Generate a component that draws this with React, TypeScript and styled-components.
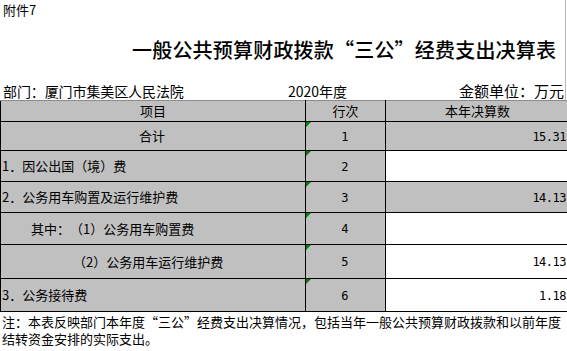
import React from 'react';
import styled, { createGlobalStyle } from 'styled-components';

const GlobalStyle = createGlobalStyle`
  html, body {
    margin: 0;
    padding: 0;
    background: #ffffff;
  }
  body {
    font-family: "Noto Sans CJK SC", "Noto Sans", sans-serif;
    color: #000;
    text-spacing-trim: space-all;
  }
`;

type Row = {
  label: string;
  indent?: number;
  center?: boolean;
  no: string;
  value: string;
  valueShaded: boolean;
  height: number;
};

const rows: Row[] = [
  { label: '合计', center: true, no: '1', value: '15.31', valueShaded: true, height: 29 },
  { label: '1．因公出国（境）费', no: '2', value: '', valueShaded: false, height: 31 },
  { label: '2．公务用车购置及运行维护费', no: '3', value: '14.13', valueShaded: true, height: 31 },
  { label: '其中：（1）公务用车购置费', indent: 29, no: '4', value: '', valueShaded: false, height: 32 },
  { label: '（2）公务用车运行维护费', indent: 71, no: '5', value: '14.13', valueShaded: false, height: 34 },
  { label: '3．公务接待费', no: '6', value: '1.18', valueShaded: false, height: 33 },
];

const Page = styled.div`
  width: 567px;
  height: 351px;
  position: relative;
  overflow: hidden;
`;

const TopArea = styled.div`
  width: 565px;
  border-right: 1px solid #b8b8b8;
`;

const Attachment = styled.div`
  height: 20px;
  padding-left: 3px;
  font-size: 13px;
  line-height: 20px;
`;

const Title = styled.h1`
  margin: 0;
  height: 60px;
  padding-left: 132px;
  font-size: 20px;
  font-weight: 500;
  line-height: 60px;
  white-space: nowrap;
  letter-spacing: 0.2px;
`;

const InfoBar = styled.div`
  height: 20px;
  display: grid;
  grid-template-columns: 288px 1fr auto;
  align-items: end;
  font-size: 14px;
  line-height: 18px;
  white-space: nowrap;
`;

const InfoLeft = styled.span`
  padding-left: 3px;
  letter-spacing: -0.1px;
`;

const InfoRight = styled.span`
  padding-right: 1px;
  font-size: 15px;
`;

const Table = styled.table`
  border-collapse: collapse;
  table-layout: fixed;
  width: 566px;
  font-size: 13px;
`;

const HeadCell = styled.th<{ $w: number }>`
  width: ${(p) => p.$w}px;
  height: 20px;
  padding: 0;
  background: #c0c0c0;
  border: 1px solid #000;
  border-top: 1px solid #8c8c8c;
  font-weight: 400;
  text-align: center;
  line-height: 18px;
`;

const Cell = styled.td<{ $shaded?: boolean; $align?: 'left' | 'center' | 'right' }>`
  position: relative;
  padding: 0 3px 0 1px;
  background: ${(p) => (p.$shaded ? '#c0c0c0' : '#ffffff')};
  border: 1px solid #000;
  text-align: ${(p) => p.$align || 'left'};
  line-height: 18px;
  white-space: nowrap;
`;

const Label = styled.span<{ $indent: number }>`
  padding-left: ${(p) => p.$indent}px;
`;

const Marker = styled.span`
  position: absolute;
  left: 0;
  top: 0;
  width: 0;
  height: 0;
  border-top: 5px solid #008000;
  border-right: 5px solid transparent;
`;

const Number = styled.span`
  font-family: "DejaVu Sans Mono", "Liberation Mono", monospace;
  font-size: 12px;
  letter-spacing: -0.5px;
`;

const Note = styled.p`
  margin: 0;
  padding: 1px 0 0 2px;
  font-size: 13px;
  line-height: 17px;
`;

const App = () => {
  return (
    <Page>
      <GlobalStyle />
      <TopArea>
        <Attachment>附件7</Attachment>
        <Title>一般公共预算财政拨款“三公”经费支出决算表</Title>
        <InfoBar>
          <InfoLeft>部门：厦门市集美区人民法院</InfoLeft>
          <span>2020年度</span>
          <InfoRight>金额单位：万元</InfoRight>
        </InfoBar>
      </TopArea>
      <Table>
        <thead>
          <tr>
            <HeadCell $w={304}>项目</HeadCell>
            <HeadCell $w={79}>行次</HeadCell>
            <HeadCell $w={183}>本年决算数</HeadCell>
          </tr>
        </thead>
        <tbody>
          {rows.map((r) => (
            <tr key={r.no} style={{ height: r.height }}>
              <Cell $shaded $align={r.center ? 'center' : 'left'}>
                <Label $indent={r.indent || 0}>{r.label}</Label>
              </Cell>
              <Cell $shaded $align="center">
                <Marker />
                <Number>{r.no}</Number>
              </Cell>
              <Cell $shaded={r.valueShaded} $align="right">
                <Number>{r.value}</Number>
              </Cell>
            </tr>
          ))}
        </tbody>
      </Table>
      <Note>
        注：本表反映部门本年度“三公”经费支出决算情况，包括当年一般公共预算财政拨款和以前年度结转资金安排的实际支出。
      </Note>
    </Page>
  );
};

export default App;
